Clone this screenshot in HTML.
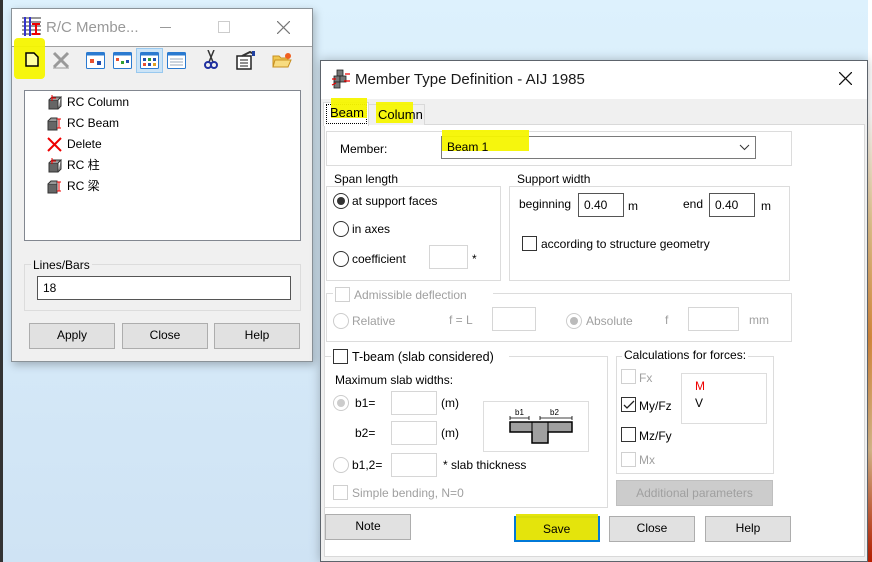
<!DOCTYPE html>
<html><head><meta charset="utf-8">
<style>
*{margin:0;padding:0;box-sizing:border-box}
body{width:872px;height:562px;overflow:hidden;position:relative;background:linear-gradient(#ddf1fd,#cfe3f4);font-family:"Liberation Sans","Noto Sans CJK JP",sans-serif;font-size:12px;color:#000}
.a{position:absolute}
.t{position:absolute;line-height:14px;white-space:nowrap}
.g{position:absolute;border:1px solid #dcdcdc}
.gl{position:absolute;line-height:14px;padding:0 2px;white-space:nowrap}
.in{position:absolute;background:#fff;border:1px solid #7a7a7a}
.ind{position:absolute;background:#fff;border:1px solid #d6d6d6}
.cb{position:absolute;width:15px;height:15px;border:1px solid #333;background:#fff}
.cbd{position:absolute;width:15px;height:15px;border:1px solid #d0d0d0;background:#fff}
.rb{position:absolute;width:16px;height:16px;border:1px solid #333;border-radius:50%;background:#fff}
.rbd{position:absolute;width:16px;height:16px;border:1px solid #ccc;border-radius:50%;background:#fff}
.btn{position:absolute;background:#e1e1e1;border:1px solid #adadad;text-align:center;line-height:23px}
.dis{color:#a0a0a0}
.hl{position:absolute;background:#f5f500;opacity:.95}
</style></head><body>
<div class="a" style="left:0;top:0;width:3px;height:562px;background:#333"></div>
<div class="a" style="left:868px;top:0;width:4px;height:562px;background:linear-gradient(#fff 0,#fff 20%,#e8c890 40%,#e09040 60%,#e0c090 80%,#c02000 100%)"></div>

<!-- LEFT DIALOG -->
<div class="a" style="left:11px;top:8px;width:302px;height:354px;background:#f0f0f0;border:1px solid #8a9298;box-shadow:2px 3px 8px rgba(0,0,0,.25)">
  <div class="a" style="left:0;top:0;width:300px;height:38px;background:#fff;border-bottom:1px solid #a0a0a0"></div>
</div>
<svg class="a" style="left:22px;top:17px" width="19" height="19" viewBox="0 0 19 19"><rect x="0" y="0" width="19" height="19" fill="#fff"/><path d="M0 1H19M0 5H19M0 9H19M0 13H19M0 17H19" stroke="#333" stroke-width="1"/><path d="M3 0V19M8 0V19" stroke="#33c" stroke-width="2"/><path d="M10 7H18M14 7V17M10 17H18" stroke="#e00" stroke-width="2"/></svg>
<div class="t" style="left:46px;top:19px;font-size:15px;line-height:18px;color:#999">R/C Membe...</div>
<div class="a" style="left:160px;top:27px;width:11px;height:1px;background:#999"></div>
<div class="a" style="left:218px;top:21px;width:12px;height:12px;border:1px solid #ccc"></div>
<svg class="a" style="left:277px;top:21px" width="13" height="13"><path d="M0 0L13 13M13 0L0 13" stroke="#777" stroke-width="1.2"/></svg>
<!-- toolbar -->
<div class="hl" style="left:14px;top:38px;width:31px;height:41px;border-radius:4px"></div>
<svg class="a" style="left:25px;top:52px" width="14" height="15"><path d="M1 1H9L13 5V14H1Z" fill="#ffffa0" stroke="#000" stroke-width="1.5"/></svg>
<svg class="a" style="left:52px;top:51px" width="18" height="18"><path d="M2 2L16 16M16 2L2 16" stroke="#999" stroke-width="3"/><path d="M1 17H17" stroke="#999"/></svg>
<svg class="a" style="left:86px;top:52px" width="19" height="17"><rect x="0.5" y="0.5" width="18" height="16" rx="1" fill="#fff" stroke="#2a7ad0"/><rect x="0.5" y="0.5" width="18" height="3" fill="#2a7ad0"/><rect x="4" y="7" width="4" height="4" fill="#e85030"/><rect x="11" y="9" width="4" height="4" fill="#2050b0"/></svg>
<svg class="a" style="left:113px;top:52px" width="19" height="17"><rect x="0.5" y="0.5" width="18" height="16" rx="1" fill="#fff" stroke="#2a7ad0"/><rect x="0.5" y="0.5" width="18" height="3" fill="#2a7ad0"/><rect x="3" y="6" width="3" height="3" fill="#e85030"/><rect x="8" y="9" width="3" height="3" fill="#30a030"/><rect x="13" y="8" width="3" height="3" fill="#2050b0"/></svg>
<div class="a" style="left:136px;top:48px;width:27px;height:25px;background:#cce4f7;border:1px solid #99c9ef"></div>
<svg class="a" style="left:140px;top:52px" width="19" height="17"><rect x="0.5" y="0.5" width="18" height="16" rx="1" fill="#fff" stroke="#2a7ad0"/><rect x="0.5" y="0.5" width="18" height="3" fill="#2a7ad0"/><g fill="#2050b0"><rect x="3" y="6" width="3" height="3"/><rect x="8" y="6" width="3" height="3" fill="#30a030"/><rect x="13" y="6" width="3" height="3"/><rect x="3" y="11" width="3" height="3" fill="#e85030"/><rect x="8" y="11" width="3" height="3"/><rect x="13" y="11" width="3" height="3" fill="#e0a020"/></g></svg>
<svg class="a" style="left:167px;top:52px" width="19" height="17"><rect x="0.5" y="0.5" width="18" height="16" rx="1" fill="#fff" stroke="#2a7ad0"/><rect x="0.5" y="0.5" width="18" height="3" fill="#2a7ad0"/><path d="M3 7H16M3 10H16M3 13H16" stroke="#9ab" /></svg>
<svg class="a" style="left:204px;top:50px" width="14" height="20"><path d="M4 0L9 12M10 0L5 12" stroke="#333" stroke-width="1.5"/><circle cx="4" cy="15" r="3" fill="none" stroke="#2030a0" stroke-width="2"/><circle cx="10" cy="15" r="3" fill="none" stroke="#2030a0" stroke-width="2"/></svg>
<svg class="a" style="left:236px;top:51px" width="20" height="19"><rect x="1" y="5" width="14" height="13" fill="#fff" stroke="#222" stroke-width="1.5"/><path d="M4 9H12M4 12H12M4 15H12" stroke="#222"/><path d="M6 5L14 1L18 3" stroke="#333" stroke-width="2" fill="none"/><rect x="16" y="0" width="3" height="5" fill="#2040a0"/></svg>
<svg class="a" style="left:272px;top:52px" width="20" height="17"><path d="M1 4H7L9 6H16V15H1Z" fill="#f0c850" stroke="#c89020"/><path d="M3 8H19L16 15H1Z" fill="#f8dc80" stroke="#c89020"/><circle cx="16" cy="4" r="3" fill="#f06020"/></svg>
<!-- tree -->
<div class="a" style="left:24px;top:90px;width:277px;height:151px;background:#fff;border:1px solid #828790"></div>
<svg class="a" style="left:47px;top:95px" width="15" height="15"><path d="M2 5H11V14H2Z" fill="#666" stroke="#333"/><path d="M2 5L5 2H14L11 5M11 14L14 11V2" fill="#999" stroke="#333"/><path d="M5 0V6M4 3H9" stroke="#e00"/></svg>
<div class="t" style="left:67px;top:95px">RC Column</div>
<svg class="a" style="left:47px;top:116px" width="15" height="15"><path d="M1 5H10V14H1Z" fill="#666" stroke="#333"/><path d="M1 5L4 2H10L10 5" fill="#999" stroke="#333"/><path d="M10 3H14M12 3V12M10 12H14" stroke="#e00"/></svg>
<div class="t" style="left:67px;top:116px">RC Beam</div>
<svg class="a" style="left:47px;top:137px" width="15" height="15"><path d="M1 1L14 14M14 1L1 14" stroke="#e00" stroke-width="2"/></svg>
<div class="t" style="left:67px;top:137px">Delete</div>
<svg class="a" style="left:47px;top:158px" width="15" height="15"><path d="M2 5H11V14H2Z" fill="#666" stroke="#333"/><path d="M2 5L5 2H14L11 5M11 14L14 11V2" fill="#999" stroke="#333"/><path d="M5 0V6M4 3H9" stroke="#e00"/></svg>
<div class="t" style="left:67px;top:158px">RC 柱</div>
<svg class="a" style="left:47px;top:179px" width="15" height="15"><path d="M1 5H10V14H1Z" fill="#666" stroke="#333"/><path d="M1 5L4 2H10L10 5" fill="#999" stroke="#333"/><path d="M10 3H14M12 3V12M10 12H14" stroke="#e00"/></svg>
<div class="t" style="left:67px;top:179px">RC 梁</div>
<div class="g" style="left:24px;top:264px;width:277px;height:47px"></div>
<div class="gl" style="left:31px;top:258px;background:#f0f0f0">Lines/Bars</div>
<div class="in" style="left:37px;top:276px;width:254px;height:24px;border-color:#555"></div>
<div class="t" style="left:43px;top:281px">18</div>
<div class="btn" style="left:29px;top:323px;width:86px;height:26px">Apply</div>
<div class="btn" style="left:122px;top:323px;width:86px;height:26px">Close</div>
<div class="btn" style="left:214px;top:323px;width:86px;height:26px">Help</div>

<!-- RIGHT DIALOG -->
<div class="a" style="left:320px;top:60px;width:548px;height:502px;background:#f0f0f0;border:1px solid #5d646c;box-shadow:0 0 10px rgba(0,0,0,.25)">
  <div class="a" style="left:0;top:0;width:546px;height:38px;background:#fff"></div>
</div>
<svg class="a" style="left:331px;top:69px" width="20" height="20"><g fill="#777" stroke="#222" stroke-width=".8"><rect x="6" y="1" width="6" height="6"/><rect x="3" y="7" width="6" height="6"/><rect x="9" y="7" width="6" height="6"/><rect x="3" y="13" width="6" height="6"/></g><path d="M1 10H5M14 5H19M13 12H19M1 16L5 14" stroke="#e00" stroke-width="1.2"/></svg>
<div class="t" style="left:355px;top:71px;font-size:15px;line-height:18px;color:#1a1a1a">Member Type Definition - AIJ 1985</div>
<svg class="a" style="left:839px;top:72px" width="13" height="13"><path d="M0 0L13 13M13 0L0 13" stroke="#111" stroke-width="1.3"/></svg>
<!-- tabs/panel -->
<div class="a" style="left:324px;top:124px;width:541px;height:433px;background:#fff;border:1px solid #d9d9d9"></div>
<div class="a" style="left:368px;top:104px;width:57px;height:21px;background:#f0f0f0;border:1px solid #d9d9d9;border-bottom:none"></div>
<div class="a" style="left:323px;top:102px;width:46px;height:24px;background:#fff;border:1px solid #d9d9d9;border-bottom:none"></div>
<div class="a" style="left:326px;top:104px;width:41px;height:20px;border:1px dotted #000"></div>
<div class="hl" style="left:331px;top:98px;width:36px;height:20px"></div>
<div class="hl" style="left:376px;top:102px;width:37px;height:21px"></div>
<div class="t" style="left:330px;top:106px;font-size:13px">Beam</div>
<div class="t" style="left:378px;top:108px;font-size:13px">Column</div>
<!-- member -->
<div class="g" style="left:326px;top:131px;width:466px;height:35px"></div>
<div class="t" style="left:340px;top:142px">Member:</div>
<div class="a" style="left:441px;top:136px;width:315px;height:23px;background:#fff;border:1px solid #7a7a7a"></div>
<div class="hl" style="left:442px;top:130px;width:87px;height:21px"></div>
<div class="t" style="left:447px;top:140px">Beam 1</div>
<svg class="a" style="left:739px;top:144px" width="11" height="7"><path d="M1 1L5.5 5.5L10 1" stroke="#333" fill="none"/></svg>
<!-- span length -->
<div class="g" style="left:326px;top:186px;width:175px;height:95px"></div>
<div class="gl" style="left:332px;top:172px;background:#fff">Span length</div>
<div class="rb" style="left:333px;top:193px"></div><div class="a" style="left:337px;top:197px;width:8px;height:8px;border-radius:50%;background:#333"></div>
<div class="t" style="left:352px;top:194px">at support faces</div>
<div class="rb" style="left:333px;top:221px"></div><div class="t" style="left:352px;top:222px">in axes</div>
<div class="rb" style="left:333px;top:251px"></div><div class="t" style="left:352px;top:252px">coefficient</div>
<div class="ind" style="left:429px;top:245px;width:39px;height:24px"></div>
<div class="t" style="left:472px;top:252px">*</div>
<!-- support width -->
<div class="g" style="left:509px;top:186px;width:281px;height:95px"></div>
<div class="gl" style="left:515px;top:172px;background:#fff">Support width</div>
<div class="t" style="left:519px;top:197px">beginning</div>
<div class="in" style="left:578px;top:193px;width:46px;height:24px;border-color:#555"></div><div class="t" style="left:584px;top:198px">0.40</div>
<div class="t" style="left:628px;top:199px">m</div>
<div class="t" style="left:683px;top:197px">end</div>
<div class="in" style="left:709px;top:193px;width:46px;height:24px;border-color:#555"></div><div class="t" style="left:715px;top:198px">0.40</div>
<div class="t" style="left:761px;top:199px">m</div>
<div class="cb" style="left:522px;top:236px"></div>
<div class="t" style="left:541px;top:237px">according to structure geometry</div>
<!-- admissible -->
<div class="g" style="left:326px;top:293px;width:466px;height:49px"></div>
<div class="a" style="left:333px;top:287px;width:160px;height:14px;background:#fff"></div>
<div class="cbd" style="left:335px;top:287px"></div>
<div class="t dis" style="left:354px;top:288px">Admissible deflection</div>
<div class="rbd" style="left:333px;top:313px"></div><div class="t dis" style="left:352px;top:314px">Relative</div>
<div class="t dis" style="left:449px;top:313px">f = L</div>
<div class="ind" style="left:492px;top:307px;width:44px;height:24px"></div>
<div class="rbd" style="left:566px;top:313px"></div><div class="a" style="left:570px;top:317px;width:8px;height:8px;border-radius:50%;background:#bbb"></div>
<div class="t dis" style="left:586px;top:314px">Absolute</div>
<div class="t dis" style="left:665px;top:313px">f</div>
<div class="ind" style="left:688px;top:307px;width:51px;height:24px"></div>
<div class="t dis" style="left:749px;top:313px">mm</div>
<!-- T-beam -->
<div class="g" style="left:324px;top:356px;width:284px;height:152px"></div>
<div class="a" style="left:331px;top:349px;width:178px;height:16px;background:#fff"></div>
<div class="cb" style="left:333px;top:349px"></div>
<div class="t" style="left:352px;top:350px;font-size:12.5px">T-beam (slab considered)</div>
<div class="t" style="left:335px;top:373px">Maximum slab widths:</div>
<div class="rbd" style="left:333px;top:395px"></div><div class="a" style="left:337px;top:399px;width:8px;height:8px;border-radius:50%;background:#ccc"></div>
<div class="t" style="left:355px;top:396px">b1=</div>
<div class="ind" style="left:391px;top:391px;width:46px;height:24px"></div>
<div class="t" style="left:441px;top:396px">(m)</div>
<div class="t" style="left:355px;top:426px">b2=</div>
<div class="ind" style="left:391px;top:421px;width:46px;height:24px"></div>
<div class="t" style="left:441px;top:426px">(m)</div>
<div class="rbd" style="left:333px;top:457px"></div>
<div class="t" style="left:352px;top:458px">b1,2=</div>
<div class="ind" style="left:391px;top:453px;width:46px;height:24px"></div>
<div class="t" style="left:443px;top:458px">*  slab thickness</div>
<div class="a" style="left:483px;top:401px;width:106px;height:51px;border:1px solid #ddd;background:#fff"></div>
<svg class="a" style="left:483px;top:401px" width="106" height="51"><path d="M27 20V45M27 22H42V33H48V20" fill="none"/><path d="M27 21H89V31H65V42H49V31H27Z" fill="#a0a0a0" stroke="#000" stroke-width="1.5"/><path d="M49 31V21M65 31V21" stroke="#000" stroke-width="1"/><path d="M27 17H46M57 17H89" stroke="#000" stroke-width=".8"/><path d="M27 15V19M46 15V19M57 15V19M89 15V19" stroke="#000" stroke-width=".8"/><text x="32" y="14" font-size="8" font-family="Liberation Sans">b1</text><text x="67" y="14" font-size="8" font-family="Liberation Sans">b2</text></svg>
<div class="cbd" style="left:333px;top:485px"></div>
<div class="t dis" style="left:352px;top:486px">Simple bending, N=0</div>
<!-- calcs -->
<div class="g" style="left:616px;top:356px;width:158px;height:118px"></div>
<div class="gl" style="left:622px;top:348px;background:#fff">Calculations for forces:</div>
<div class="cbd" style="left:621px;top:369px"></div><div class="t dis" style="left:639px;top:371px">Fx</div>
<div class="cb" style="left:621px;top:397px"></div>
<svg class="a" style="left:623px;top:400px" width="12" height="10"><path d="M1 5L4 8L11 1" stroke="#222" stroke-width="1.3" fill="none"/></svg>
<div class="t" style="left:639px;top:399px">My/Fz</div>
<div class="cb" style="left:621px;top:427px"></div><div class="t" style="left:639px;top:429px">Mz/Fy</div>
<div class="cbd" style="left:621px;top:452px"></div><div class="t dis" style="left:639px;top:453px">Mx</div>
<div class="a" style="left:681px;top:373px;width:86px;height:51px;border:1px solid #ddd;background:#fff"></div>
<div class="t" style="left:695px;top:379px;color:#e00">M</div>
<div class="t" style="left:695px;top:396px">V</div>
<div class="btn dis" style="left:616px;top:480px;width:157px;height:26px;background:#cccccc;border-color:#bfbfbf;line-height:25px">Additional parameters</div>
<!-- buttons -->
<div class="btn" style="left:325px;top:514px;width:86px;height:26px">Note</div>
<div class="a" style="left:514px;top:516px;width:86px;height:26px;border:2px solid #0078d7;background:#e1e1e1"></div>
<div class="hl" style="left:516px;top:514px;width:82px;height:26px;background:#e4e400"></div>
<div class="t" style="left:543px;top:522px">Save</div>
<div class="btn" style="left:609px;top:516px;width:86px;height:26px">Close</div>
<div class="btn" style="left:705px;top:516px;width:86px;height:26px">Help</div>
</body></html>
